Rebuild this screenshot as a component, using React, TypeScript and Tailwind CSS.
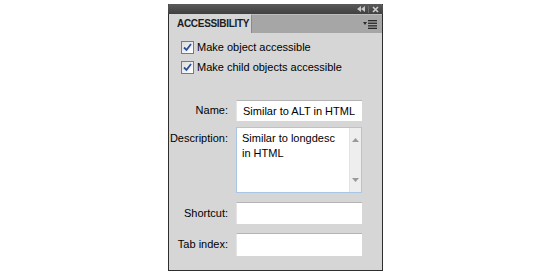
import React from 'react';

const font = { fontFamily: 'Tahoma, "Liberation Sans", Arial, sans-serif' };

function Check({ label }: { label: string }) {
  return (
    <label className="flex items-center h-[20px] text-[11px] text-black whitespace-nowrap">
      <span className="w-[13px] h-[13px] shrink-0 border border-[#7a7a7a] bg-gradient-to-br from-[#dcdcdc] to-white flex items-center justify-center mr-[3px]">
        <svg width="9" height="9" viewBox="0 0 9 9">
          <path d="M1 4.5 L3.5 7 L8 1" stroke="#2a4f9a" strokeWidth="1.8" fill="none" />
        </svg>
      </span>
      {label}
    </label>
  );
}

function Label({ text, top = false }: { text: string; top?: boolean }) {
  return (
    <div className={`w-[67px] shrink-0 text-right pr-[8px] text-[11px] text-black whitespace-nowrap ${top ? 'pt-[3px]' : ''}`}>
      {text}
    </div>
  );
}

function Field({ label, value, h }: { label: string; value?: string; h: string }) {
  return (
    <div className="flex items-center">
      <Label text={label} />
      <div className={`w-[126px] shrink-0 ${h} bg-white border-t border-t-[#b4b4b4] border-l border-l-[#e4e4e4] px-[6px] flex items-center text-[11px] text-black whitespace-nowrap`}>
        {value}
      </div>
    </div>
  );
}

export default function App() {
  return (
    <div className="w-[550px] h-[274px] bg-white relative" style={font}>
      <div className="absolute left-[168px] top-[4px] w-[215px] h-[267px] border border-[#2e2e2e] border-t-0 bg-[#d6d6d6] flex flex-col">
        <div className="h-[10px] bg-gradient-to-b from-[#5a5a5a] to-[#404040] flex items-center justify-end pr-[4px] gap-[3px] rounded-t-[2px] -mx-px">
          <svg width="8" height="6" viewBox="0 0 8 6">
            <path d="M4 0 L0 3 L4 6 Z M8 0 L4 3 L8 6 Z" fill="#c8c8c8" />
          </svg>
          <span className="w-px h-[7px] bg-[#6c6c6c]" />
          <svg width="7" height="7" viewBox="0 0 7 7">
            <path d="M1 1 L6 6 M6 1 L1 6" stroke="#d0d0d0" strokeWidth="1.6" />
          </svg>
        </div>
        <div className="h-[19px] flex bg-[#a6a6a6] border-t border-[#bdbdbd]">
          <div className="w-[82px] shrink-0 bg-[#d6d6d6] -mt-px flex items-center pl-[8px] text-[10px] font-bold tracking-[-0.3px] text-[#1c1c1c] whitespace-nowrap overflow-hidden">
            ACCESSIBILITY
          </div>
          <div className="flex-1 flex items-center justify-end pr-[5px] border-l border-[#8a8a8a]">
            <svg width="14" height="9" viewBox="0 0 14 9">
              <path d="M0 2 L4 2 L2 5 Z" fill="#2a2a2a" />
              <rect x="5" y="0" width="9" height="1.3" fill="#2a2a2a" />
              <rect x="5" y="2.6" width="9" height="1.3" fill="#2a2a2a" />
              <rect x="5" y="5.2" width="9" height="1.3" fill="#2a2a2a" />
              <rect x="5" y="7.7" width="9" height="1.3" fill="#2a2a2a" />
            </svg>
          </div>
        </div>
        <div className="pl-[12px] pt-[4px]">
          <Check label="Make object accessible" />
          <Check label="Make child objects accessible" />
        </div>
        <div className="flex flex-col pt-[23px]">
          <Field label="Name:" value="Similar to ALT in HTML" h="h-[21px]" />
          <div className="flex items-start mt-[6px]">
            <Label text="Description:" top />
            <div className="w-[126px] h-[66px] shrink-0 bg-white border border-[#a9c6e6] flex">
              <div className="flex-1 px-[5px] pt-[3px] text-[11px] leading-[15px] text-black">
                Similar to longdesc
                <br />
                in HTML
              </div>
              <div className="w-[12px] bg-[#eeeeee] border-l border-[#e2e2e2] flex flex-col items-center justify-between py-[10px]">
                <svg width="7" height="4" viewBox="0 0 7 4"><path d="M0 4 L3.5 0 L7 4 Z" fill="#9a9a9a" /></svg>
                <svg width="7" height="4" viewBox="0 0 7 4"><path d="M0 0 L3.5 4 L7 0 Z" fill="#9a9a9a" /></svg>
              </div>
            </div>
          </div>
          <div className="mt-[9px]">
            <Field label="Shortcut:" h="h-[22px]" />
          </div>
          <div className="mt-[9px]">
            <Field label="Tab index:" h="h-[23px]" />
          </div>
        </div>
      </div>
    </div>
  );
}
